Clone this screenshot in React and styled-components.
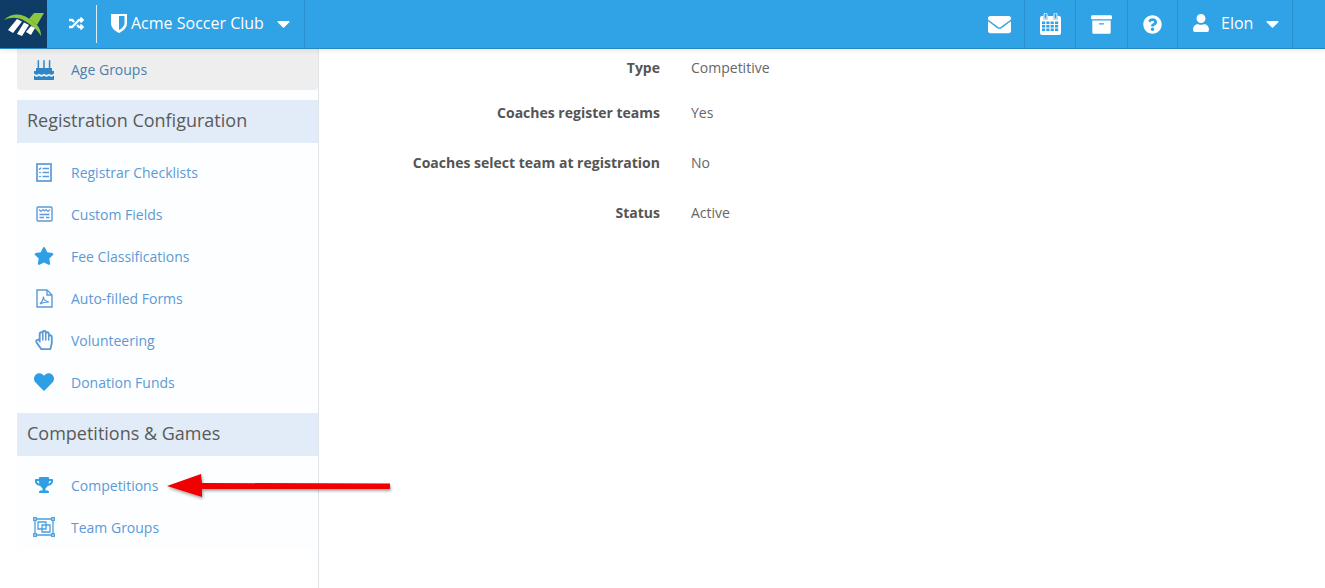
import React from 'react';
import styled, { createGlobalStyle } from 'styled-components';
import {
  FaRandom, FaCaretDown, FaEnvelope, FaArchive, FaQuestionCircle, FaUser,
  FaStar, FaHeart, FaTrophy, FaRegHandPaper,
} from 'react-icons/fa';

const GlobalStyle = createGlobalStyle`
  html, body { margin: 0; padding: 0; background: #fff; }
  body { font-family: 'Open Sans', 'Liberation Sans', sans-serif; font-size: 14px; color: #555; overflow: hidden; }
`;

const Page = styled.div`
  position: relative;
  width: 1325px;
  height: 588px;
  overflow: hidden;
`;

// Top navigation
const TopBar = styled.header`
  position: relative;
  z-index: 2;
  display: flex;
  align-items: stretch;
  height: 48px;
  background: #30a2e6;
  border-bottom: 1px solid #2a86c0;
  box-shadow: 0 2px 5px rgba(0, 0, 0, 0.08);
  color: #fff;
`;

const LogoBox = styled.div`
  width: 47px;
  background: #0e3c66;
  display: flex;
  align-items: center;
  justify-content: center;
`;

const ClubSwitch = styled.div`
  width: 258px;
  box-sizing: border-box;
  display: flex;
  align-items: center;
  border-right: 1px solid #2a8fcf;
`;

const ShuffleSlot = styled.div`
  width: 50px;
  height: 38px;
  display: flex;
  align-items: center;
  justify-content: center;
  padding: 0 0 2px 10px;
  box-sizing: border-box;
  border-right: 1px solid #d9effb;
  font-size: 15px;
`;

const ClubName = styled.div`
  display: flex;
  align-items: center;
  margin: 0 0 2px 14px;
  font-size: 16px;
  white-space: nowrap;
  svg { flex: none; }
  span { margin-left: 4px; }
`;

const Caret = styled(FaCaretDown)`
  font-size: 21px;
  margin-left: ${(p) => p.$gap}px;
`;

const RightNav = styled.nav`
  display: flex;
  margin-left: auto;
  margin-right: 32px;
`;

const NavIcon = styled.div`
  width: ${(p) => p.$w}px;
  box-sizing: border-box;
  display: flex;
  align-items: center;
  justify-content: center;
  border-right: 1px solid #2a8fcf;
  font-size: 21px;
`;

const UserMenu = styled.div`
  width: 115px;
  display: flex;
  align-items: center;
  padding: 0 0 2px 14px;
  box-sizing: border-box;
  border-right: 1px solid #2a8fcf;
  font-size: 16px;
  span { margin-left: 11px; }
`;

const Body = styled.div`
  display: flex;
  height: 539px;
`;

// Sidebar
const Sidebar = styled.aside`
  width: 301px;
  flex: none;
  padding-left: 17px;
  border-right: 1px solid #dfe3e8;
`;

const SideInner = styled.div`
  background: #fdfeff;
  height: 500px;
`;

const ActiveItem = styled.a`
  display: flex;
  align-items: center;
  height: 41px;
  background: #eeeeee;
  border-radius: 0 0 4px 4px;
  color: #4a7fae;
  margin-bottom: 10px;
`;

const SectionTitle = styled.h3`
  margin: 0;
  height: 43px;
  line-height: 41px;
  padding-left: 10px;
  background: #e1ecf8;
  font-size: 18px;
  font-weight: 400;
  color: #5a5a5a;
`;

const NavList = styled.ul`
  list-style: none;
  margin: 0;
  padding: 8px 0 10px;
`;

const NavItem = styled.li`
  display: flex;
  align-items: center;
  height: 42px;
  color: #5b9ad6;
`;

const IconSlot = styled.span`
  width: 54px;
  flex: none;
  display: flex;
  align-items: center;
  justify-content: center;
  font-size: 20px;
  color: ${(p) => p.$color || '#5b9ad6'};
`;

// Main content
const Main = styled.main`
  flex: 1;
  padding-top: 9px;
`;

const DetailRow = styled.div`
  display: flex;
  line-height: 20px;
  margin-bottom: ${(p) => (p.$tight ? 25 : 30)}px;
`;

const DetailLabel = styled.div`
  width: 341px;
  text-align: right;
  font-weight: 700;
  color: #555;
`;

const DetailValue = styled.div`
  margin-left: 31px;
  color: #666;
`;

const ArrowOverlay = styled.svg`
  position: absolute;
  left: 160px;
  top: 465px;
  z-index: 3;
`;

const Logo = () => (
  <svg width="42" height="28" viewBox="0 0 42 28">
    <path d="M1 10 C8 3 18 3 25 8 L34 15 C37 18 38 22 38 26 C34 19 28 15 22 11 C15 7 8 7 1 10Z" fill="#8cc63f" />
    <path d="M26 9 L31 3 L41 3 L34 15Z" fill="#8cc63f" />
    <path d="M5 20 L14 9 L19 11.5 L10 23Z" fill="#fff" />
    <path d="M14 24 L21 12.5 L26 15 L19 26Z" fill="#fff" />
    <path d="M23 22 L28 16 L32 18 L28 25Z" fill="#fff" />
  </svg>
);

const Shield = () => (
  <svg width="16" height="20" viewBox="0 0 16 20">
    <path d="M0 1 H16 V10 C16 15 12 18 8 20 C4 18 0 15 0 10Z" fill="#fff" />
    <path d="M8 3 H13.5 V10 C13.5 13 11 15.5 8 17Z" fill="#30a2e6" />
  </svg>
);

const CalendarSolid = () => (
  <svg width="21" height="22" viewBox="0 0 21 22">
    <rect x="4" y="0" width="3" height="6" rx="1.5" fill="none" stroke="#fff" strokeWidth="1" />
    <rect x="14" y="0" width="3" height="6" rx="1.5" fill="none" stroke="#fff" strokeWidth="1" />
    <path d="M2 3 H3.5 V6.5 H7.5 V3 H13.5 V6.5 H17.5 V3 H19 A2 2 0 0 1 21 5 V20 A2 2 0 0 1 19 22 H2 A2 2 0 0 1 0 20 V5 A2 2 0 0 1 2 3Z" fill="#fff" />
    <g fill="#30a2e6">
      {[2, 6.3, 10.6, 15].map((x) =>
        [8.5, 12, 15.5].map((y) => <rect key={`${x}-${y}`} x={x} y={y} width="3.2" height="2.6" />)
      )}
    </g>
  </svg>
);

const Cake = () => (
  <svg width="20" height="20" viewBox="0 0 20 20" fill="#2e86c9">
    <rect x="3.6" y="2" width="1.5" height="6" />
    <rect x="9.2" y="2" width="1.5" height="6" />
    <rect x="14.8" y="2" width="1.5" height="6" />
    <circle cx="4.3" cy="1" r="0.9" />
    <circle cx="10" cy="1" r="0.9" />
    <circle cx="15.6" cy="1" r="0.9" />
    <rect x="2" y="8" width="16" height="3" />
    <path d="M0 11 H20 V13.4 C18 15 16.4 15 15 13.7 C13.4 15 11.6 15 10 13.7 C8.4 15 6.6 15 5 13.7 C3.6 15 2 15 0 13.4Z" />
    <path d="M0 15.5 C2 17 3.6 17 5 15.8 C6.6 17 8.4 17 10 15.8 C11.6 17 13.4 17 15 15.8 C16.4 17 18 17 20 15.5 V20 H0Z" />
  </svg>
);

const Checklist = () => (
  <svg width="16" height="19" viewBox="0 0 16 19" fill="none" stroke="#5b9ad6" strokeWidth="1.7">
    <rect x="1" y="1" width="14" height="17" />
    <path d="M6.5 5.5 H13 M6.5 9.5 H13 M6.5 13.5 H13" strokeWidth="1.4" />
    <path d="M3 5.5 L3.8 6.3 L5 4.6 M3 9.5 H5 M3 13.5 H5" strokeWidth="1.2" />
  </svg>
);

const FieldsForm = () => (
  <svg width="17" height="16" viewBox="0 0 17 16" fill="none" stroke="#5b9ad6" strokeWidth="1.4">
    <rect x="1" y="1" width="15" height="14" rx="1" />
    <path d="M3 3.5 L5 5.5 L7 3.5 L8.5 5 L10 3.5 L12 5.5 L14 3.5" strokeWidth="1.1" />
    <path d="M3.5 8.5 H13.5 M3.5 11.5 H8 M10 11.5 H13.5" />
  </svg>
);

const PdfDoc = () => (
  <svg width="17" height="19" viewBox="0 0 17 19" fill="none" stroke="#5b9ad6" strokeWidth="1.4">
    <path d="M1 1 H11 L16 6 V18 H1Z" />
    <path d="M11 1 V6 H16" />
    <path d="M4 15 C6 13 7.5 9.5 7.5 7.5 C7.5 10 9.5 12.5 13 13 C10 13 6.5 13.5 4 15Z" strokeWidth="1.1" />
  </svg>
);

const TeamFrame = () => (
  <svg width="22" height="20" viewBox="0 0 22 20" fill="none" stroke="#4a9fe0" strokeWidth="1.3">
    <path d="M3 2 H19 M3 18 H19 M2 3 V17 M20 3 V17" />
    <rect x="0.7" y="0.7" width="2.6" height="2.6" />
    <rect x="18.7" y="0.7" width="2.6" height="2.6" />
    <rect x="0.7" y="16.7" width="2.6" height="2.6" />
    <rect x="18.7" y="16.7" width="2.6" height="2.6" />
    <path d="M5 5 H13 V12 H5Z" />
    <path d="M9 8 H17 V15 H9Z" />
  </svg>
);

const App = () => (
  <Page>
    <GlobalStyle />
    <TopBar>
      <LogoBox><Logo /></LogoBox>
      <ClubSwitch>
        <ShuffleSlot><FaRandom /></ShuffleSlot>
        <ClubName>
          <Shield />
          <span>Acme Soccer Club</span>
          <Caret $gap={9} />
        </ClubName>
      </ClubSwitch>
      <RightNav>
        <NavIcon $w={51}><FaEnvelope size={23} /></NavIcon>
        <NavIcon $w={51}><CalendarSolid /></NavIcon>
        <NavIcon $w={52}><FaArchive /></NavIcon>
        <NavIcon $w={50}><FaQuestionCircle size={19} /></NavIcon>
        <UserMenu>
          <FaUser size={18} />
          <span>Elon</span>
          <Caret $gap={9} />
        </UserMenu>
      </RightNav>
    </TopBar>
    <Body>
      <Sidebar>
        <SideInner>
          <ActiveItem>
            <IconSlot><Cake /></IconSlot>
            Age Groups
          </ActiveItem>
          <SectionTitle>Registration Configuration</SectionTitle>
          <NavList>
            <NavItem><IconSlot><Checklist /></IconSlot>Registrar Checklists</NavItem>
            <NavItem><IconSlot><FieldsForm /></IconSlot>Custom Fields</NavItem>
            <NavItem><IconSlot $color="#2f9fe5"><FaStar /></IconSlot>Fee Classifications</NavItem>
            <NavItem><IconSlot><PdfDoc /></IconSlot>Auto-filled Forms</NavItem>
            <NavItem><IconSlot><FaRegHandPaper /></IconSlot>Volunteering</NavItem>
            <NavItem><IconSlot $color="#2f9fe5"><FaHeart /></IconSlot>Donation Funds</NavItem>
          </NavList>
          <SectionTitle>Competitions &amp; Games</SectionTitle>
          <NavList>
            <NavItem><IconSlot $color="#2f9fe5"><FaTrophy size={18} /></IconSlot>Competitions</NavItem>
            <NavItem><IconSlot><TeamFrame /></IconSlot>Team Groups</NavItem>
          </NavList>
        </SideInner>
      </Sidebar>
      <Main>
        <DetailRow $tight>
          <DetailLabel>Type</DetailLabel>
          <DetailValue>Competitive</DetailValue>
        </DetailRow>
        <DetailRow>
          <DetailLabel>Coaches register teams</DetailLabel>
          <DetailValue>Yes</DetailValue>
        </DetailRow>
        <DetailRow>
          <DetailLabel>Coaches select team at registration</DetailLabel>
          <DetailValue>No</DetailValue>
        </DetailRow>
        <DetailRow>
          <DetailLabel>Status</DetailLabel>
          <DetailValue>Active</DetailValue>
        </DetailRow>
      </Main>
    </Body>
    <ArrowOverlay width="240" height="40" viewBox="0 0 240 40">
      <defs>
        <filter id="arrowShadow" x="-10%" y="-50%" width="120%" height="200%">
          <feDropShadow dx="1" dy="2" stdDeviation="1.5" floodColor="#000" floodOpacity="0.35" />
        </filter>
      </defs>
      <path d="M7 21 L41 9 L42 18 L230 18.5 L230 24 L42 24 L42 32Z" fill="#f00000" filter="url(#arrowShadow)" />
    </ArrowOverlay>
  </Page>
);

export default App;
